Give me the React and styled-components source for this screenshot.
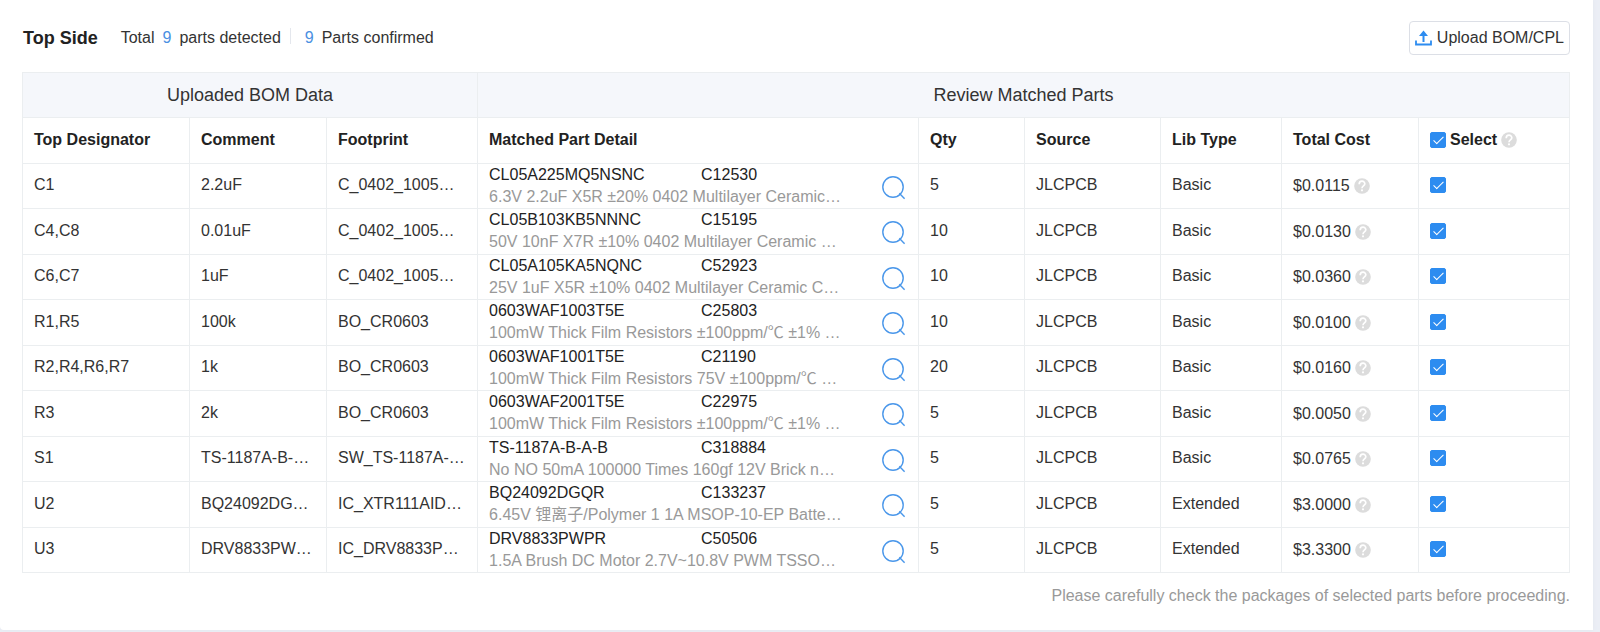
import React, { useState } from "react";
import styled, { createGlobalStyle } from "styled-components";

const GlobalStyle = createGlobalStyle`
  *, *::before, *::after { box-sizing: border-box; }
  body {
    margin: 0;
    background: #ebeef5;
    color: #333;
    font: 16px/22px "Liberation Sans", Arial, "Noto Sans CJK SC", sans-serif;
  }
`;

const Page = styled.div`
  padding: 0 7px 2px 0;
`;

const Panel = styled.main`
  padding: 21px 23px 22px 22px;
  background: #fff;
  border-bottom-left-radius: 4px;
  box-shadow: 0 0 4px #e2e6ee;
`;

const Header = styled.header`
  display: flex;
  align-items: center;
  justify-content: space-between;
  margin-bottom: 17px;
`;

const Summary = styled.div`
  display: flex;
  align-items: center;
`;

const Title = styled.h1`
  margin: 0 23px 0 1px;
  font-size: 18px;
  line-height: 22px;
  color: #222;
`;

const Stat = styled.span`
  display: flex;
  gap: 8px;
`;

const Count = styled.span`
  color: #4a90e2;
`;

const Divider = styled.span`
  width: 1px;
  height: 16px;
  margin: 0 14px 4px 9px;
  background: #e4e7ed;
`;

const UploadButton = styled.button`
  display: flex;
  align-items: center;
  gap: 5px;
  height: 34px;
  padding: 0 5px;
  border: 1px solid #dcdfe6;
  border-radius: 4px;
  background: #fff;
  color: #333;
  font: inherit;
  cursor: pointer;
`;

const Table = styled.table`
  width: 100%;
  table-layout: fixed;
  border-collapse: separate;
  border-spacing: 0;
  border: solid #ebeef0;
  border-width: 1px 0 0 1px;
`;

const Col = styled.col`
  width: ${(p) => p.$width}px;
`;

const Row = styled.tr`
  height: ${(p) => (p.$tall ? 46 : 45)}px;
`;

const Cell = styled.td`
  padding: 0 0 2px 11px;
  border: solid #ebeef0;
  border-width: 0 1px 1px 0;
  vertical-align: middle;
  white-space: nowrap;
`;

const HeadCell = styled(Cell)`
  color: #222;
  font-weight: bold;
  text-align: left;
`;

const GroupCell = styled(Cell)`
  padding: 0;
  background: #f5f7fb;
  font-size: 18px;
  font-weight: normal;
  text-align: center;
`;

const DetailCell = styled(Cell)`
  padding-bottom: 0;
  vertical-align: top;
`;

const CostCell = styled(Cell)`
  padding-bottom: 0;
`;

const Detail = styled.div`
  display: flex;
  align-items: center;
  justify-content: space-between;
  padding-right: 12px;
`;

const PartName = styled.div`
  display: grid;
  grid-template-columns: 212px 1fr;
  color: #222;
`;

const Description = styled.div`
  color: #999;
`;

const IconButton = styled.button`
  display: flex;
  padding: 2px 0 0;
  border: 0;
  background: none;
  cursor: pointer;
`;

const Inline = styled.div`
  display: flex;
  align-items: center;
  gap: 4px;
`;

const CheckLabel = styled.label`
  display: flex;
  align-items: center;
  gap: 4px;
`;

const Checkbox = styled.input`
  appearance: none;
  display: grid;
  place-items: center;
  width: 16px;
  height: 16px;
  margin: 0;
  border: 1px solid #2d8cf0;
  border-radius: 2px;
  background: #fff;
  cursor: pointer;

  &:checked { background: #2d8cf0; }
  &:checked::after {
    content: "";
    width: 5px;
    height: 10px;
    margin-bottom: 2px;
    border: solid #fff;
    border-width: 0 1px 1px 0;
    transform: rotate(45deg);
  }
`;

const Note = styled.p`
  margin: 11px 0 0;
  line-height: 24px;
  color: #999;
  text-align: right;
`;

const UploadIcon = () => (
  <svg width="17" height="16" viewBox="0 0 17 16" aria-hidden="true">
    <path d="M8.5 0.5 L13 6 H9.5 V12 H7.5 V6 H4 Z" fill="#2d8cf0" />
    <path d="M1 10.5 V14.5 H16 V10.5" fill="none" stroke="#2d8cf0" strokeWidth="1.8" />
  </svg>
);

const SearchIcon = () => (
  <svg width="26" height="26" viewBox="0 0 26 26" fill="none" stroke="#4a97ea" strokeWidth="1.4" aria-hidden="true">
    <circle cx="13" cy="13" r="10.2" />
    <path d="M19.3 19.3 L24.6 24.8" />
  </svg>
);

const HelpIcon = () => (
  <svg width="16" height="16" viewBox="0 0 16 16" role="img" aria-label="Help">
    <circle cx="8" cy="8" r="7.8" fill="#dcdcdc" />
    <path d="M5.2 6.2 C5.2 2.2 10.8 2.3 10.8 5.8 C10.8 7.9 8 7.9 8 10.2" fill="none" stroke="#fff" strokeWidth="1.7" />
    <circle cx="8" cy="12.3" r="1.1" fill="#fff" />
  </svg>
);

const columnWidths = [167, 137, 151, 441, 106, 136, 121, 137, 151];
const columnNames = ["Top Designator", "Comment", "Footprint", "Matched Part Detail", "Qty", "Source", "Lib Type", "Total Cost"];

const parts = [
  ["C1", "2.2uF", "C_0402_1005…", "CL05A225MQ5NSNC", "C12530", "6.3V 2.2uF X5R ±20% 0402 Multilayer Ceramic…", 5, "Basic", "$0.0115"],
  ["C4,C8", "0.01uF", "C_0402_1005…", "CL05B103KB5NNNC", "C15195", "50V 10nF X7R ±10% 0402 Multilayer Ceramic …", 10, "Basic", "$0.0130"],
  ["C6,C7", "1uF", "C_0402_1005…", "CL05A105KA5NQNC", "C52923", "25V 1uF X5R ±10% 0402 Multilayer Ceramic C…", 10, "Basic", "$0.0360"],
  ["R1,R5", "100k", "BO_CR0603", "0603WAF1003T5E", "C25803", "100mW Thick Film Resistors ±100ppm/℃ ±1% …", 10, "Basic", "$0.0100"],
  ["R2,R4,R6,R7", "1k", "BO_CR0603", "0603WAF1001T5E", "C21190", "100mW Thick Film Resistors 75V ±100ppm/℃ …", 20, "Basic", "$0.0160"],
  ["R3", "2k", "BO_CR0603", "0603WAF2001T5E", "C22975", "100mW Thick Film Resistors ±100ppm/℃ ±1% …", 5, "Basic", "$0.0050"],
  ["S1", "TS-1187A-B-…", "SW_TS-1187A-…", "TS-1187A-B-A-B", "C318884", "No NO 50mA 100000 Times 160gf 12V Brick n…", 5, "Basic", "$0.0765"],
  ["U2", "BQ24092DG…", "IC_XTR111AID…", "BQ24092DGQR", "C133237", "6.45V 锂离子/Polymer 1 1A MSOP-10-EP Batte…", 5, "Extended", "$3.0000"],
  ["U3", "DRV8833PW…", "IC_DRV8833P…", "DRV8833PWPR", "C50506", "1.5A Brush DC Motor 2.7V~10.8V PWM TSSO…", 5, "Extended", "$3.3300"],
];

export default function App() {
  const [selected, setSelected] = useState(() => parts.map(() => true));
  const toggle = (index) => setSelected((all) => all.map((on, i) => (i === index ? !on : on)));
  const toggleAll = (event) => {
    const on = event.target.checked;
    setSelected(parts.map(() => on));
  };

  return (
    <Page>
      <GlobalStyle />
      <Panel>
        <Header>
          <Summary>
            <Title>Top Side</Title>
            <Stat><span>Total</span><Count>9</Count><span>parts detected</span></Stat>
            <Divider />
            <Stat><Count>9</Count><span>Parts confirmed</span></Stat>
          </Summary>
          <UploadButton type="button"><UploadIcon />Upload BOM/CPL</UploadButton>
        </Header>

        <Table>
          <colgroup>
            {columnWidths.map((width, i) => <Col key={i} $width={width} />)}
          </colgroup>
          <thead>
            <Row>
              <GroupCell as="th" colSpan={3} scope="colgroup">Uploaded BOM Data</GroupCell>
              <GroupCell as="th" colSpan={6} scope="colgroup">Review Matched Parts</GroupCell>
            </Row>
            <Row $tall>
              {columnNames.map((name) => <HeadCell as="th" scope="col" key={name}>{name}</HeadCell>)}
              <HeadCell as="th" scope="col">
                <Inline>
                  <CheckLabel>
                    <Checkbox type="checkbox" checked={selected.every(Boolean)} onChange={toggleAll} />
                    Select
                  </CheckLabel>
                  <HelpIcon />
                </Inline>
              </HeadCell>
            </Row>
          </thead>
          <tbody>
            {parts.map(([designator, comment, footprint, name, code, description, qty, lib, cost], i) => (
              <Row key={designator} $tall={i % 2 === 1}>
                <Cell>{designator}</Cell>
                <Cell>{comment}</Cell>
                <Cell>{footprint}</Cell>
                <DetailCell>
                  <Detail>
                    <div>
                      <PartName><span>{name}</span><span>{code}</span></PartName>
                      <Description>{description}</Description>
                    </div>
                    <IconButton type="button" aria-label={`Search parts for ${designator}`}><SearchIcon /></IconButton>
                  </Detail>
                </DetailCell>
                <Cell>{qty}</Cell>
                <Cell>JLCPCB</Cell>
                <Cell>{lib}</Cell>
                <CostCell><Inline>{cost}<HelpIcon /></Inline></CostCell>
                <Cell>
                  <Checkbox type="checkbox" aria-label={`Select ${designator}`} checked={selected[i]} onChange={() => toggle(i)} />
                </Cell>
              </Row>
            ))}
          </tbody>
        </Table>
        <Note>Please carefully check the packages of selected parts before proceeding.</Note>
      </Panel>
    </Page>
  );
}
